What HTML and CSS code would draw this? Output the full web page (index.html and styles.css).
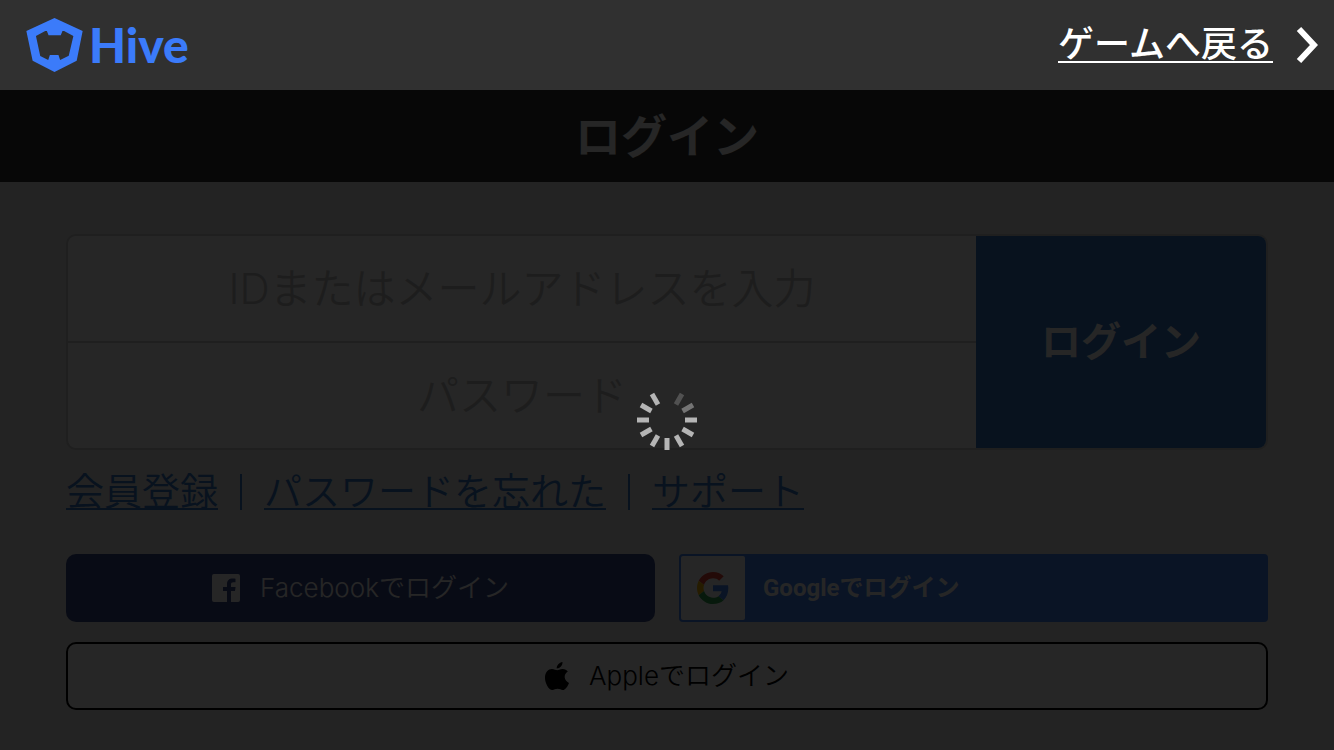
FILE: index.html
```html
<!DOCTYPE html>
<html lang="ja">
<head>
    <meta charset="UTF-8">
    <meta name="viewport" content="width=device-width, initial-scale=1">
    <title>ログイン</title>
    <link rel="stylesheet" href="styles.css">
</head>
<body>
    <header class="navbar">
        <div class="logo">
            <svg class="logo-mark" viewBox="78 53 170 163" aria-hidden="true">
                <path fill="#3b7bfa" fill-rule="evenodd" d="M163 53 L248 92 L230 182 L163 216 L97 182 L78 92 Z M107 107 L135 92 L140 92 L145 105 L182 105 L187 92 L192 92 L220 107 L206 167 L180 180 L175 165 L149 165 L144 180 L120 168 Z"/>
            </svg>
            <span class="logo-text">Hive</span>
        </div>
        <a class="back-link" href="#">
            <span class="back-text">ゲームへ戻る</span>
            <svg class="back-arrow" viewBox="0 0 22 38" aria-hidden="true">
                <path d="M3 3 L18 19 L3 35" fill="none" stroke="#fff" stroke-width="6"/>
            </svg>
        </a>
    </header>

    <main class="webview">
        <h1 class="title">ログイン</h1>

        <div class="content">
            <form class="login-form">
                <div class="fields">
                    <input type="text" aria-label="ID" placeholder="IDまたはメールアドレスを入力">
                    <input type="password" aria-label="パスワード" placeholder="パスワード">
                </div>
                <button type="button" class="login-button">ログイン</button>
            </form>

            <nav class="links">
                <a href="#">会員登録</a>
                <span class="divider"></span>
                <a href="#">パスワードを忘れた</a>
                <span class="divider"></span>
                <a href="#">サポート</a>
            </nav>

            <div class="social">
                <button type="button" class="social-button facebook">
                    <svg class="facebook-icon" viewBox="0 0 28 28" aria-hidden="true">
                        <path fill="#fff" d="M2 0h24a2 2 0 0 1 2 2v24a2 2 0 0 1-2 2h-7V17h4l.6-4H19v-2.500c0-1.500.7-2.200 2.300-2.200H23.500V4.800c-.6-.1-1.700-.3-3-.3-3.300 0-5.500 2-5.500 5.500v3h-4v4h4v11H2a2 2 0 0 1-2-2V2a2 2 0 0 1 2-2z"/>
                    </svg>
                    <span class="label">Facebookでログイン</span>
                </button>
                <button type="button" class="social-button google">
                    <span class="google-box">
                        <svg class="google-icon" viewBox="0 0 48 48" aria-hidden="true">
                            <path fill="#ea4335" d="M24 9.500c3.540 0 6.710 1.220 9.210 3.600l6.850-6.850C35.900 2.380 30.470 0 24 0 14.620 0 6.510 5.380 2.560 13.220l7.980 6.190C12.430 13.720 17.740 9.500 24 9.500z"/>
                            <path fill="#4285f4" d="M46.980 24.550c0-1.570-.15-3.090-.38-4.550H24v9.020h12.940c-.58 2.960-2.260 5.480-4.780 7.180l7.730 6c4.510-4.180 7.090-10.360 7.090-17.650z"/>
                            <path fill="#fbbc05" d="M10.530 28.590c-.48-1.450-.76-2.990-.76-4.590s.27-3.140.76-4.590l-7.980-6.190C.92 16.460 0 20.120 0 24c0 3.880.92 7.540 2.560 10.780l7.970-6.190z"/>
                            <path fill="#34a853" d="M24 48c6.480 0 11.930-2.130 15.890-5.810l-7.730-6c-2.150 1.450-4.920 2.300-8.160 2.300-6.260 0-11.570-4.220-13.470-9.910l-7.980 6.190C6.510 42.620 14.620 48 24 48z"/>
                        </svg>
                    </span>
                    <span class="label">Googleでログイン</span>
                </button>
                <button type="button" class="social-button apple">
                    <svg class="apple-icon" viewBox="0 0 24 28" aria-hidden="true">
                        <path d="M17.500 0c.2 3.500-2.500 6.400-5.800 6.500C11.400 3.300 14.300.4 17.500 0z"/>
                        <path d="M12.200 8.300c1.200 0 3-1.400 5.500-1.300 2.300.1 4 1 5.100 2.600-4.700 2.900-3.900 9.300 1.200 11.300-1 2.700-3.500 7.100-6.200 7.100-2 0-2.700-1.200-5.200-1.200S9.200 28 7.400 28C3.800 28 0 21.300 0 15.700 0 10.200 3.400 7 6.900 7c2.300 0 4 1.300 5.300 1.300z"/>
                    </svg>
                    <span class="label">Appleでログイン</span>
                </button>
            </div>
        </div>

        <div class="loading">
            <svg class="spinner" viewBox="-30 -30 60 60" role="img" aria-label="Loading">
                <g stroke="#b5b5b5" stroke-width="5">
                    <path d="M0-18V-30" transform="rotate(30)" opacity=".3"/>
                    <path d="M0-18V-30" transform="rotate(60)" opacity=".55"/>
                    <path d="M0-18V-30" transform="rotate(90)"/>
                    <path d="M0-18V-30" transform="rotate(120)"/>
                    <path d="M0-18V-30" transform="rotate(150)"/>
                    <path d="M0-18V-30" transform="rotate(180)"/>
                    <path d="M0-18V-30" transform="rotate(210)"/>
                    <path d="M0-18V-30" transform="rotate(240)"/>
                    <path d="M0-18V-30" transform="rotate(270)"/>
                    <path d="M0-18V-30" transform="rotate(300)"/>
                    <path d="M0-18V-30" transform="rotate(330)"/>
                </g>
            </svg>
        </div>
    </main>
</body>
</html>
```
FILE: styles.css
```css
* {
    box-sizing: border-box;
}
body {
    margin: 0;
    min-height: 100vh;
    display: flex;
    flex-direction: column;
    font-family: Inter, "Noto Sans CJK JP", sans-serif;
    font-weight: 350;
    background-color: #e9e9e9;
}
button, input {
    font-family: inherit;
    font-weight: inherit;
}
.navbar {
    display: flex;
    align-items: center;
    justify-content: space-between;
    height: 90px;
    padding: 0 16px 0 26px;
    background-color: #303030;
}
.logo {
    display: flex;
    align-items: center;
    gap: 6px;
}
.logo-mark {
    width: 57px;
    height: 54px;
}
.logo-text {
    font-family: Lato, sans-serif;
    font-size: 48px;
    font-weight: 900;
    line-height: 54px;
    color: #3b7bfa;
}
.back-link {
    display: flex;
    align-items: center;
    gap: 23px;
    color: #fff;
    text-decoration: none;
}
.back-text {
    font-size: 36px;
    font-weight: 500;
    line-height: 34px;
    border-bottom: 2px solid #fff;
}
.back-arrow {
    width: 22px;
    height: 38px;
}
.webview {
    position: relative;
    flex: 1;
}
.title {
    margin: 0;
    font-size: 46px;
    font-weight: 700;
    line-height: 92px;
    text-align: center;
    color: #fff;
    background-color: #303030;
}
.content {
    padding: 52px 66px 40px;
}
.login-form {
    display: flex;
    height: 216px;
    border: 2px solid #ccc;
    border-radius: 10px;
    background-color: #fff;
    overflow: hidden;
}
.fields {
    flex: 1;
    display: flex;
    flex-direction: column;
}
.fields input {
    flex: 1;
    width: 100%;
    min-height: 0;
    padding: 0;
    border: none;
    border-radius: 0;
    background: none;
    font-size: 42px;
    text-align: center;
}
.fields input + input {
    border-top: 2px solid #ccc;
}
.fields input::placeholder {
    color: #c4c4c4;
    opacity: 1;
}
.login-button {
    width: 290px;
    padding: 0 0 6px;
    border: none;
    font-size: 40px;
    font-weight: 700;
    color: #fff;
    background-color: #3578c8;
}
.links {
    display: flex;
    align-items: center;
    height: 56px;
    margin: 14px 0 34px;
    font-size: 38px;
}
.links a {
    color: #3578c8;
    text-decoration: none;
    line-height: 34px;
    border-bottom: 2px solid #3578c8;
}
.divider {
    width: 2px;
    height: 36px;
    margin: 0 22px;
    background-color: #3578c8;
}
.social {
    display: grid;
    grid-template-columns: 1fr 1fr;
    gap: 20px 24px;
}
.social-button {
    display: flex;
    align-items: center;
    justify-content: center;
    gap: 20px;
    height: 68px;
    padding: 0;
    border: none;
    border-radius: 10px;
    font-size: 26px;
    color: #fff;
}
.label {
    padding-bottom: 6px;
}
.facebook {
    background-color: #3b4a8b;
}
.facebook-icon {
    width: 28px;
    height: 28px;
}
.google {
    justify-content: flex-start;
    gap: 18px;
    padding: 2px;
    border-radius: 4px;
    font-family: Roboto, "Noto Sans CJK JP", sans-serif;
    font-size: 24px;
    font-weight: 700;
    background-color: #4285f4;
}
.google-box {
    display: flex;
    align-items: center;
    justify-content: center;
    width: 64px;
    height: 64px;
    border-radius: 2px;
    background-color: #fff;
}
.google-icon {
    width: 32px;
    height: 32px;
}
.apple {
    grid-column: 1 / 3;
    border: 2px solid #000;
    color: #000;
    background-color: #fff;
}
.apple-icon {
    width: 24px;
    height: 28px;
}
.loading {
    position: absolute;
    inset: 0;
    display: flex;
    align-items: center;
    justify-content: center;
    background-color: rgba(0, 0, 0, 0.85);
}
.spinner {
    width: 60px;
    height: 60px;
}
```
